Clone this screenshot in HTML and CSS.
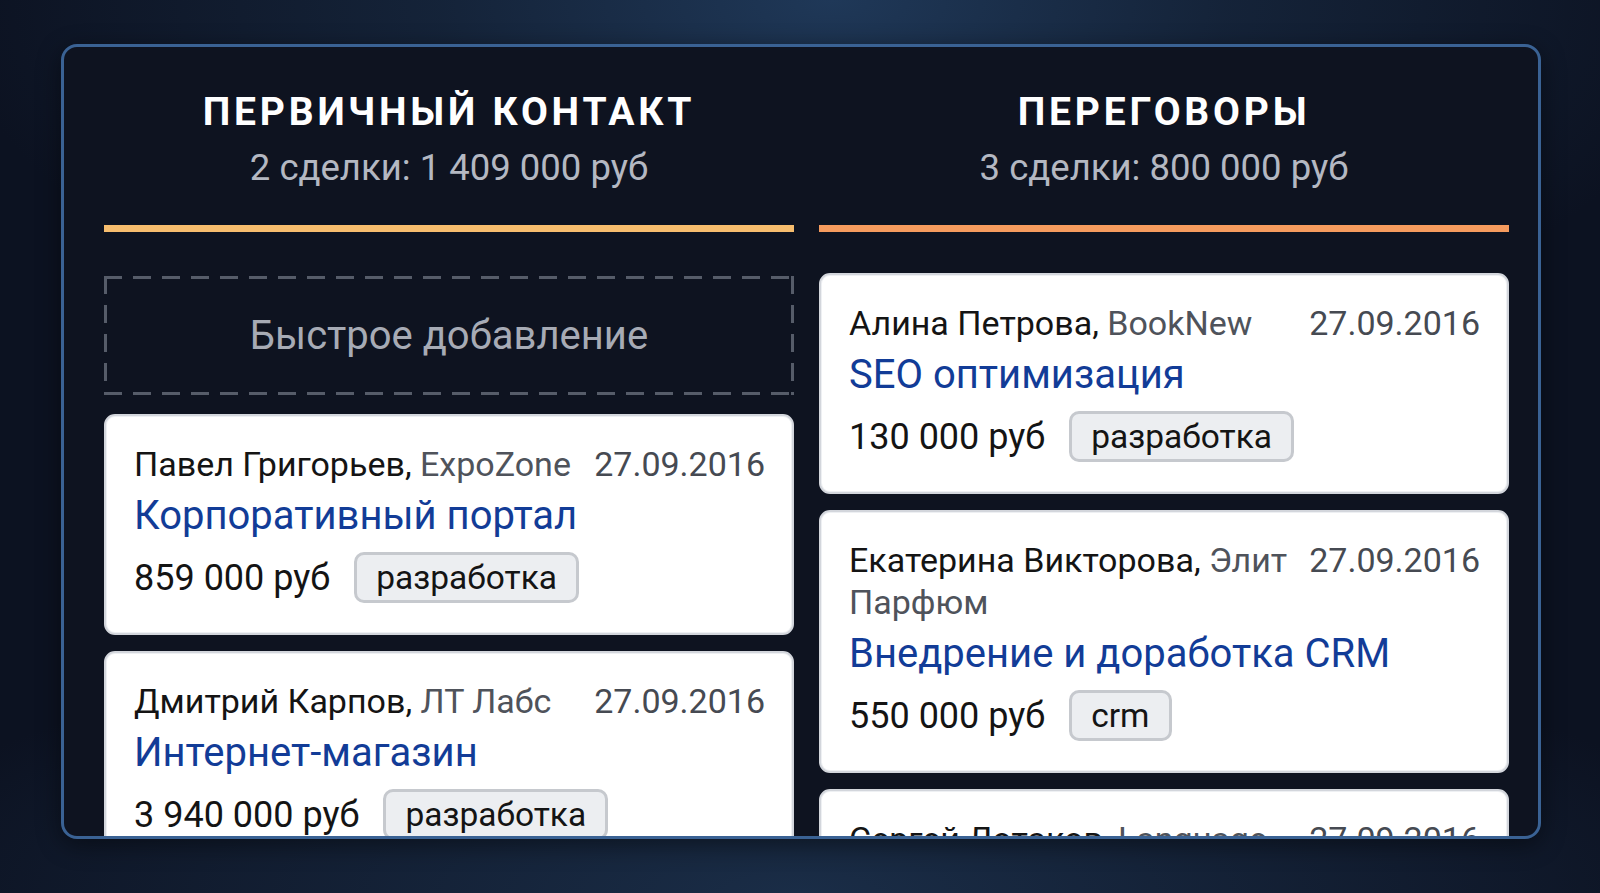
FILE: index.html
```html
<!DOCTYPE html>
<html lang="ru">
<head>
<meta charset="utf-8">
<title>Воронка продаж</title>
<link rel="stylesheet" href="styles.css">
</head>
<body>
<div class="board">
  <div class="column">
    <div class="col-head">
      <div class="col-title">ПЕРВИЧНЫЙ КОНТАКТ</div>
      <div class="col-sum">2 сделки: 1 409 000 руб</div>
      <div class="col-bar bar-light"></div>
    </div>
    <div class="col-body">
      <div class="quick-add">Быстрое добавление</div>
      <div class="card">
        <div class="card-top">
          <div class="who"><span class="person">Павел Григорьев,</span> <span class="company">ExpoZone</span></div>
          <div class="date">27.09.2016</div>
        </div>
        <div class="deal">Корпоративный портал</div>
        <div class="card-bottom">
          <span class="price">859 000 руб</span>
          <span class="tag">разработка</span>
        </div>
      </div>
      <div class="card">
        <div class="card-top">
          <div class="who"><span class="person">Дмитрий Карпов,</span> <span class="company">ЛТ Лабс</span></div>
          <div class="date">27.09.2016</div>
        </div>
        <div class="deal">Интернет-магазин</div>
        <div class="card-bottom">
          <span class="price">3 940 000 руб</span>
          <span class="tag">разработка</span>
        </div>
      </div>
    </div>
  </div>
  <div class="column">
    <div class="col-head">
      <div class="col-title">ПЕРЕГОВОРЫ</div>
      <div class="col-sum">3 сделки: 800 000 руб</div>
      <div class="col-bar bar-orange"></div>
    </div>
    <div class="col-body">
      <div class="card">
        <div class="card-top">
          <div class="who"><span class="person">Алина Петрова,</span> <span class="company">BookNew</span></div>
          <div class="date">27.09.2016</div>
        </div>
        <div class="deal">SEO оптимизация</div>
        <div class="card-bottom">
          <span class="price">130 000 руб</span>
          <span class="tag">разработка</span>
        </div>
      </div>
      <div class="card">
        <div class="card-top">
          <div class="who"><span class="person">Екатерина Викторова,</span> <span class="company">Элит Парфюм</span></div>
          <div class="date">27.09.2016</div>
        </div>
        <div class="deal">Внедрение и доработка CRM</div>
        <div class="card-bottom">
          <span class="price">550 000 руб</span>
          <span class="tag">crm</span>
        </div>
      </div>
      <div class="card">
        <div class="card-top">
          <div class="who"><span class="person">Сергей Лотаков,</span> <span class="company">Language</span></div>
          <div class="date">27.09.2016</div>
        </div>
        <div class="deal">Обучающий портал</div>
        <div class="card-bottom">
          <span class="price">120 000 руб</span>
          <span class="tag">разработка</span>
        </div>
      </div>
    </div>
  </div>
</div>
</body>
</html>
```

FILE: styles.css
```css
html, body {
  margin: 0;
  height: 100%;
}
body {
  box-sizing: border-box;
  padding: 44px 59px 54px 61px;
  font-family: Roboto, "Noto Sans", "DejaVu Sans", sans-serif;
  background:
    radial-gradient(ellipse 55% 45% at 52% 0%, #1f3858 0%, rgba(26,46,72,0.6) 45%, rgba(13,19,33,0) 100%),
    radial-gradient(ellipse 60% 30% at 50% 100%, #1a2d47 0%, rgba(13,19,33,0) 100%),
    #0c1221;
  overflow: hidden;
}
.board {
  box-sizing: border-box;
  height: 100%;
  border: 3px solid #3a6294;
  border-radius: 16px;
  background: #0e1320;
  box-shadow: 0 6px 24px rgba(0,0,0,0.45);
  padding: 0 29px 0 40px;
  display: grid;
  grid-template-columns: 1fr 1fr;
  column-gap: 25px;
  overflow: hidden;
}
.column {
  display: flex;
  flex-direction: column;
  min-width: 0;
}
.col-head {
  display: flex;
  flex-direction: column;
  align-items: center;
  padding-top: 41px;
}
.col-title {
  color: #ffffff;
  font-weight: 700;
  font-size: 39px;
  line-height: 48px;
  letter-spacing: 3.8px;
}
.col-sum {
  color: #b4b8c2;
  font-size: 36.5px;
  line-height: 48px;
  margin-top: 8px;
}
.col-bar {
  align-self: stretch;
  height: 7px;
  margin-top: 33px;
}
.bar-light { background: #f6bd6e; }
.bar-orange { background: #f59b5e; }
.col-body {
  display: flex;
  flex-direction: column;
  gap: 16px;
  margin-top: 41px;
}
.quick-add {
  box-sizing: border-box;
  height: 119px;
  margin-top: 3px;
  margin-bottom: 3px;
  background:
    linear-gradient(to right, #565c69 62%, transparent 0) top left / 29px 3px repeat-x,
    linear-gradient(to right, #565c69 62%, transparent 0) bottom left / 29px 3px repeat-x,
    linear-gradient(to bottom, #565c69 62%, transparent 0) top left / 3px 29px repeat-y,
    linear-gradient(to bottom, #565c69 62%, transparent 0) top right / 3px 29px repeat-y;
  display: flex;
  align-items: center;
  justify-content: center;
  color: #a7abb5;
  font-size: 40px;
}
.card {
  background: #ffffff;
  border: 2px solid #d3d6dc;
  border-radius: 11px;
  padding: 27px 27px 30px 28px;
  box-shadow: inset 0 0 0 1px #eef0f3;
}
.card-top {
  display: flex;
  justify-content: space-between;
  align-items: flex-start;
  gap: 20px;
  font-size: 34px;
  line-height: 42px;
}
.person { color: #141414; }
.company { color: #4f535b; }
.date { color: #464a52; white-space: nowrap; }
.deal {
  color: #123c97;
  font-size: 40px;
  line-height: 56px;
  margin-top: 3px;
}
.card-bottom {
  display: flex;
  align-items: center;
  gap: 24px;
  margin-top: 8px;
}
.price {
  color: #141414;
  font-size: 36px;
}
.tag {
  box-sizing: border-box;
  height: 51px;
  display: inline-flex;
  align-items: center;
  padding: 0 19px;
  background: #eceef1;
  border: 3px solid #c6c9ce;
  border-radius: 10px;
  color: #141414;
  font-size: 33.5px;
}
```
